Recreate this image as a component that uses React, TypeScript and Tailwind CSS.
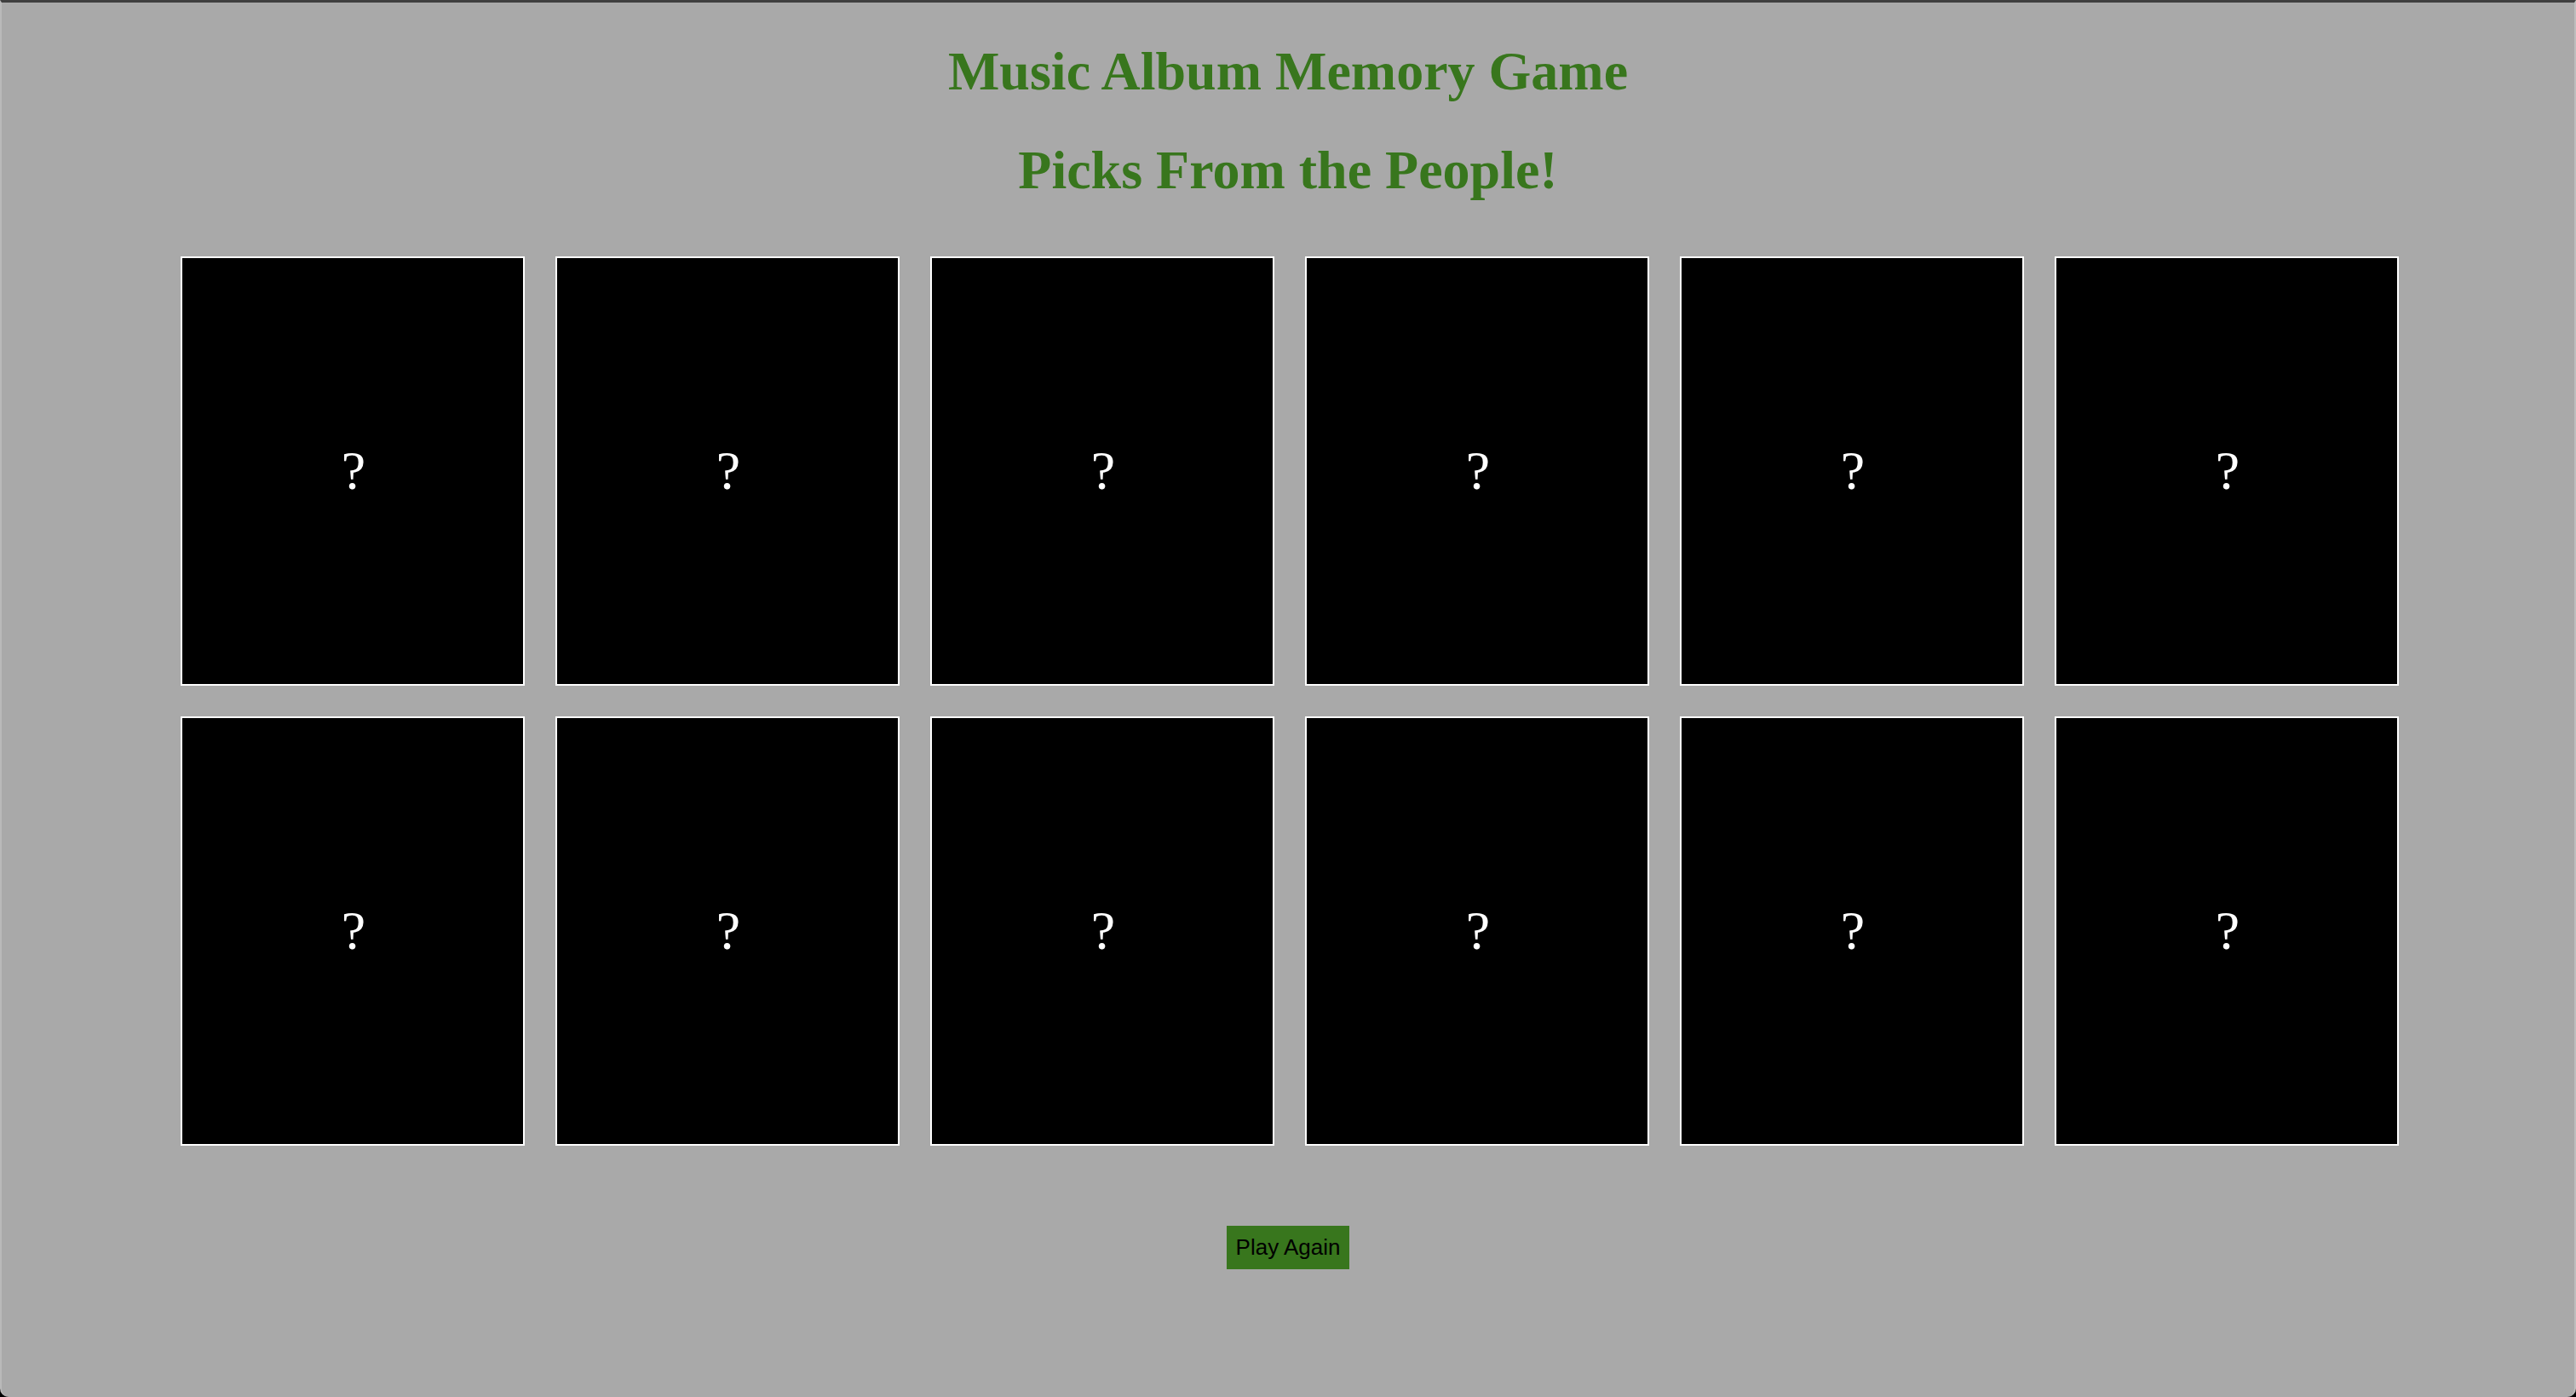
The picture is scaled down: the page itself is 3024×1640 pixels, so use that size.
const cards = Array.from({ length: 12 }, (_, i) => i)

function Card() {
  return (
    <div className="flex h-[504px] w-[404px] items-center justify-center border-2 border-white bg-black">
      <span className="ml-[2px] font-['Liberation_Serif',serif] text-[64px] leading-none text-white">?</span>
    </div>
  )
}

export default function App() {
  return (
    <div className="h-[1640px] w-full overflow-hidden bg-black">
      <div className="flex h-full w-full flex-col items-center rounded-b-[10px] border-t-[3px] border-r-2 border-l-2 border-t-[#3f3f3f] border-r-[#bdbdbd] border-l-[#b9b9b9] bg-[#a9a9a9]">
        <h1 className="mt-[44px] text-center font-['Liberation_Serif',serif] text-[64px] leading-[74px] font-bold text-[#38761d]">
          Music Album Memory Game
        </h1>
        <h2 className="mt-[42px] text-center font-['Liberation_Serif',serif] text-[64px] leading-[74px] font-bold text-[#38761d]">
          Picks From the People!
        </h2>

        {/* Card grid */}
        <div className="mt-[64px] ml-[4px] grid grid-cols-6 gap-[36px]">
          {cards.map((i) => (
            <Card key={i} />
          ))}
        </div>

        <button className="mt-[94px] flex h-[51px] items-center bg-[#38761d] px-[11px] font-['Liberation_Sans',Arial,sans-serif] text-[26px] text-black">
          Play Again
        </button>
      </div>
    </div>
  )
}
